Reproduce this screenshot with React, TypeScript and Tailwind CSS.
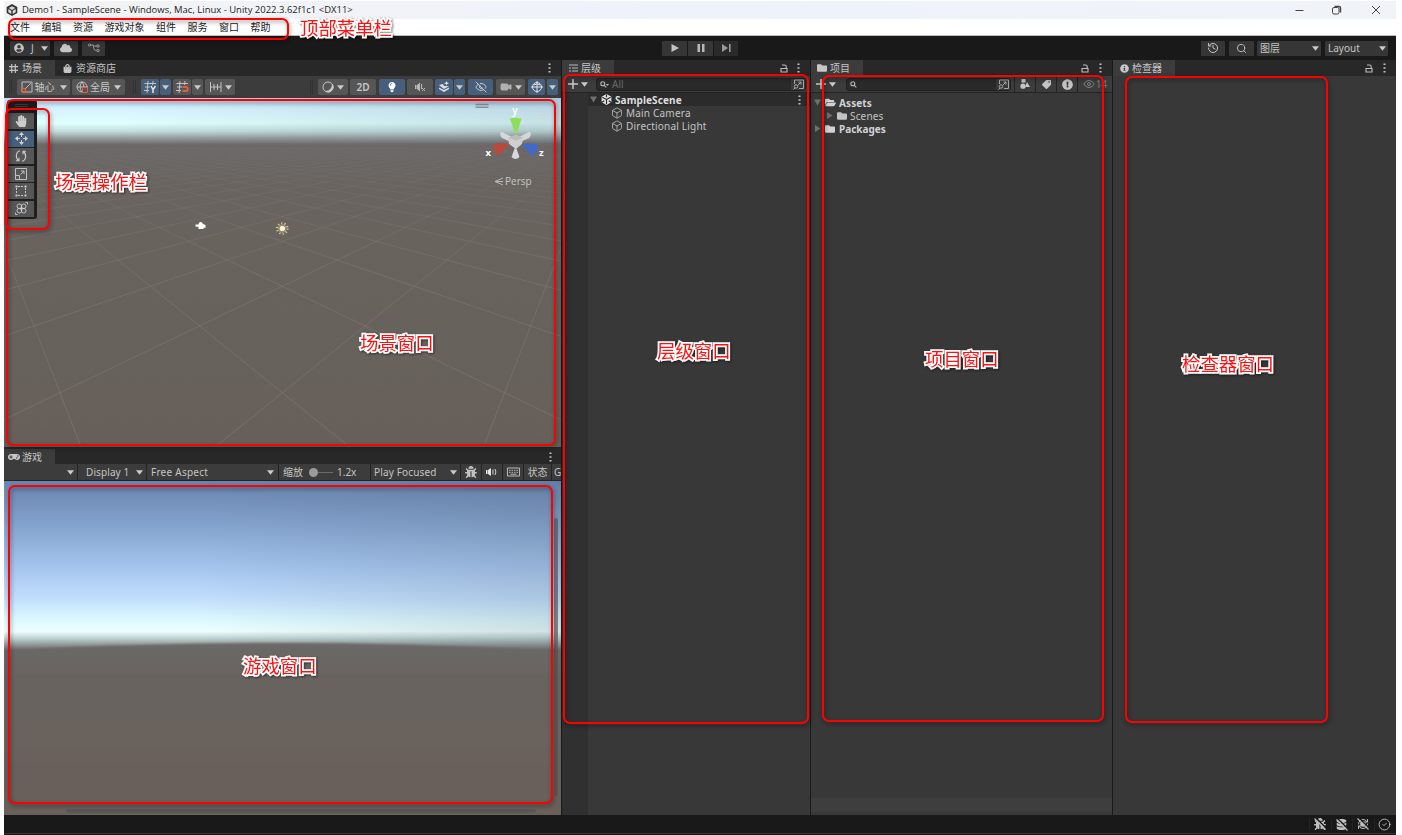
import React from 'react';
import { Globe, Search, History, Box, CircleCheck, EyeOff, Eye, RefreshCw, Video } from 'lucide-react';
import {
  FaFolder, FaFolderOpen, FaHandPaper, FaCloud, FaLightbulb, FaBug, FaTag, FaInfoCircle,
  FaExclamationCircle, FaGamepad, FaUserCircle, FaDatabase, FaShoppingBag,
} from 'react-icons/fa';

const Arrow = ({ className = '' }: { className?: string }) => (
  <svg viewBox="0 0 8 5" className={`h-[5px] w-[7px] shrink-0 ${className}`}>
    <path d="M0 0h8L4 5z" fill="#cacaca" />
  </svg>
);

const Dots = ({ className = '' }: { className?: string }) => (
  <svg viewBox="0 0 3 10" className={`h-[10px] w-[3px] shrink-0 ${className}`}>
    <path d="M.5 .500h2v1.600h-2zM.5 4.200h2v1.600h-2zM.5 7.900h2v1.600h-2z" fill="#c4c4c4" />
  </svg>
);

const LockIcon = ({ className = '' }: { className?: string }) => (
  <svg viewBox="0 0 8 9" className={`h-[9px] w-2 shrink-0 ${className}`} fill="none" stroke="#bdbdbd" strokeWidth="1.100">
    <path d="M1 4.500h6v3.500H1zM2 1h2.500q1.700 0 1.700 1.500v2" />
  </svg>
);

const Grip = ({ className = '' }: { className?: string }) => (
  <div className={`h-3.5 w-[3px] shrink-0 border-x border-[#323232] ${className}`} />
);

const Tool = ({ className = '', on = false, children }: { className?: string; on?: boolean; children?: React.ReactNode }) => (
  <div
    className={`flex h-4 shrink-0 items-center justify-center rounded-[2px] text-[10px] leading-none text-[#c8c8c8] ${
      on ? 'bg-[#46607c]' : 'bg-[#565656]'
    } ${className}`}
  >
    {children}
  </div>
);

const TopButton = ({ className = '', children }: { className?: string; children?: React.ReactNode }) => (
  <div className={`flex h-[15px] shrink-0 items-center rounded-[1px] bg-[#363636] text-[#c4c4c4] ${className}`}>{children}</div>
);

const GridGlyph = ({ kind }: { kind: 'grid' | 'magnet' | 'rule' }) => (
  <svg viewBox="0 0 13 12" className="h-3 w-[13px]" fill="none" stroke="#c4c4c4" strokeWidth="1">
    {kind === 'rule' ? (
      <path d="M1.500 1v10M5 3v6M8.500 3v6M12 1v10M1.500 6H12" />
    ) : (
      <path d="M.5 2.500H12M1 6h5M0 9.500h5M4 0L3 12M9 0L8.500 4" />
    )}
    {kind === 'grid' && <path d="M7 5l2 3.500L11.500 5M9 8.500V12" strokeWidth="1.500" stroke="#e4e4e4" />}
    {kind === 'magnet' && <path d="M6.500 6h3.300a2 2 0 010 4H6.500" stroke="#e0603c" strokeWidth="1.800" />}
  </svg>
);

function Header() {
  return (
    <>
      <div className="flex h-[18px] shrink-0 items-center bg-gradient-to-r from-[#f3f3f3] via-[#eef2fb] to-[#f0f3f8]">
        <svg viewBox="0 0 12 12" className="ml-0.5 h-3 w-3">
          <path d="M6 0l5.300 3v6L6 12 .7 9V3z" fill="#333" />
          <path d="M6 2.200L9.300 4 6 5.900 2.700 4zM2.300 5l3 1.700v3.300l-3-1.700zM9.700 5l-3 1.700v3.300l3-1.700z" fill="#d9d9d9" />
        </svg>
        <span className="ml-[4px] whitespace-nowrap font-['Open_Sans',sans-serif] text-[9.470px] leading-none text-[#222]">
          Demo1 - SampleScene - Windows, Mac, Linux - Unity 2022.3.62f1c1 &lt;DX11&gt;
        </span>
        <svg viewBox="0 0 90 12" className="ml-auto mr-[15px] h-3 w-[90px]" fill="none" stroke="#444" strokeWidth="1">
          <path d="M4.500 6.500h8M81 2l8 8M89 2l-8 8" />
          <rect x="41.500" y="3.500" width="6.500" height="6.500" rx="1.500" />
          <path d="M43.500 2.500h4.500q1.500 0 1.500 1.500v4.500" strokeWidth="1.400" />
        </svg>
      </div>
      <div className="flex h-[17px] shrink-0 items-start gap-[11.500px] border-b border-[#bdbdbd] bg-white pl-[6px] pt-[3px] text-[10px] leading-[11px] text-[#222]">
        {['文件', '编辑', '资源', '游戏对象', '组件', '服务', '窗口', '帮助'].map((t) => (
          <span key={t} className="shrink-0">{t}</span>
        ))}
      </div>
      <div className="flex h-6 shrink-0 items-center bg-[#191919]">
        <TopButton className="ml-[6px] w-10 pl-1">
          <FaUserCircle size={10} />
          <span className="ml-[7px] w-[3px] text-[10px]">J</span>
          <Arrow className="ml-[7px]" />
        </TopButton>
        <TopButton className="ml-1 w-6 justify-center"><FaCloud size={12} /></TopButton>
        <TopButton className="ml-1 w-[23px] justify-center">
          <svg viewBox="0 0 12 10" className="h-[10px] w-3" fill="none" stroke="#a0a0a0">
            <circle cx="1.600" cy="2" r="1.100" /><circle cx="10" cy="3" r="1.200" /><circle cx="10" cy="7.500" r="1.200" />
            <path d="M2.700 2h2.500l1 1h2.500M5.500 2.500c0 4 1 5 3.200 5" />
          </svg>
        </TopButton>
        <div className="ml-[557px] flex gap-px">
          <TopButton className="w-[25px] justify-center"><svg viewBox="0 0 8 8" className="h-2 w-2"><path d="M.5 0L8 4 .5 8z" fill="#c4c4c4" /></svg></TopButton>
          <TopButton className="w-[25px] justify-center"><svg viewBox="0 0 8 8" className="h-2 w-2"><path d="M.5 0h2.500v8H.5zM5 0h2.500v8H5z" fill="#b8b8b8" /></svg></TopButton>
          <div className="flex h-[15px] w-[24px] items-center justify-center bg-[#2a2a2a]"><svg viewBox="0 0 9 8" className="h-2 w-[9px]"><path d="M0 0l6 4-6 4zM7 0h1.600v8H7z" fill="#999" /></svg></div>
        </div>
        <TopButton className="ml-auto w-6 justify-center"><History size={12} /></TopButton>
        <TopButton className="ml-1 w-[25px] justify-center"><Search size={11} /></TopButton>
        <TopButton className="ml-[3px] w-16 justify-between pl-[3px] pr-[2px] text-[10px]"><span>图层</span><Arrow /></TopButton>
        <TopButton className="ml-1 mr-2 w-[63px] justify-between pl-[3px] pr-[2px] text-[10px]"><span>Layout</span><Arrow /></TopButton>
      </div>
    </>
  );
}

const Tab = ({ icon, label, className = '', active = true }: { icon: React.ReactNode; label: string; className?: string; active?: boolean }) => (
  <div className={`flex h-4 items-center text-[10px] leading-none text-[#c6c6c6] ${active ? 'bg-[#3c3c3c]' : ''} ${className}`}>
    {icon}
    <span className="whitespace-nowrap">{label}</span>
  </div>
);

const axisX = 282.3;
const horizon = 131;
const project = (a: number, b: number) => {
  const d = 1 / (0.00382 + (a + b) * 0.00131);
  return `${(axisX + (a - b) * 0.4246 * d).toFixed(1)} ${(horizon + d).toFixed(1)}`;
};
const lines = (from: number, to: number, step: number, far: number) => {
  let path = '';
  const count = Math.round((to - from) / step);
  for (let i = 0; i <= count; i++) {
    const n = from + i * step;
    path += `M${project(n, -1.2 - n)}L${project(n, far - n)}M${project(-1.2 - n, n)}L${project(far - n, n)}`;
  }
  return path;
};
const majorGrid = lines(-30, 30, 1, 44);
const minorGrid = lines(-3, 4, 0.1, 2.8);

function SceneView() {
  return (
    <svg viewBox="4 98 557 349" className="h-full w-full" preserveAspectRatio="none">
      <defs>
        <linearGradient id="sceneSky" x1="0" y1="98" x2="0" y2="447" gradientUnits="userSpaceOnUse">
          <stop offset="0" stopColor="#c0e0fa" />
          <stop offset=".035" stopColor="#d7f4ff" />
          <stop offset=".072" stopColor="#e0ffff" />
          <stop offset=".095" stopColor="#c3dddd" />
          <stop offset=".115" stopColor="#939e9e" />
          <stop offset=".134" stopColor="#6c6868" />
          <stop offset=".25" stopColor="#69645f" />
          <stop offset="1" stopColor="#67605a" />
        </linearGradient>
        <linearGradient id="sceneDim" x1="0" x2="1" y1="0" y2="0">
          <stop offset=".2" stopColor="#456" stopOpacity="0" />
          <stop offset="1" stopColor="#456" stopOpacity=".17" />
        </linearGradient>
        <linearGradient id="farFade" x1="0" y1="140" x2="0" y2="447" gradientUnits="userSpaceOnUse">
          <stop offset="0" stopColor="#000" />
          <stop offset=".08" stopColor="#444" />
          <stop offset=".45" stopColor="#eee" />
          <stop offset="1" stopColor="#fff" />
        </linearGradient>
        <linearGradient id="nearFade" x1="0" y1="270" x2="0" y2="447" gradientUnits="userSpaceOnUse">
          <stop offset="0" stopColor="#000" />
          <stop offset=".7" stopColor="#fff" />
        </linearGradient>
        <mask id="farMask" maskUnits="userSpaceOnUse" x="4" y="98" width="557" height="349"><rect x="4" y="98" width="557" height="349" fill="url(#farFade)" /></mask>
        <mask id="nearMask" maskUnits="userSpaceOnUse" x="4" y="98" width="557" height="349"><rect x="4" y="98" width="557" height="349" fill="url(#nearFade)" /></mask>
      </defs>
      <rect x="4" y="98" width="557" height="349" fill="url(#sceneSky)" />
      <rect x="4" y="98" width="557" height="46" fill="url(#sceneDim)" />
      <g mask="url(#farMask)"><path d={majorGrid} fill="none" stroke="#9a9e9e" strokeOpacity=".3" strokeWidth=".8" /></g>
      <g mask="url(#nearMask)"><path d={minorGrid} fill="none" stroke="#9c9c98" strokeOpacity=".07" strokeWidth=".7" /></g>
      <g stroke="#88929a" strokeWidth="1.500"><path d="M475.500 104.500h13M475.500 107.200h13" /></g>
      <g>
        <path d="M500 133q2-2 4 0l10 5-3 4-9-4q-2-2-2-5zM531 133q-2-2-4 0l-10 5 3 4 9-4q2-2 2-5z" fill="#d6d6d6" />
        <path d="M515.500 146l4 11q-4 4-8 0z" fill="#d8d8d8" />
        <path d="M508 138l8-3 7 3-1 6-6 5-7-5z" fill="#cfcfcf" />
        <path d="M508 138l8-3 7 3-7 2.500z" fill="#bcbcbc" />
        <path d="M510 118.500q6-1.500 11.500 0l-4.500 15h-2z" fill="#8ede5c" />
        <path d="M492.500 144.500q8-2 17-.5l-10.500 12q-6-4-6.500-11.500z" fill="#b54a3f" />
        <path d="M538.500 145q-8-2-17-1l10.500 12q6-4 6.500-11z" fill="#4468c8" />
      </g>
      <g fill="#fff" fontFamily="'Open Sans', sans-serif" fontSize="10" fontWeight="700">
        <text x="512.200" y="113.500" fontWeight="600">y</text><text x="485.500" y="155.500" fontSize="9.500">x</text><text x="539" y="155.500" fontSize="9.500">z</text>
      </g>
      <path d="M503 178l-8 3.500 8 3.500M503 181.500h-8" fill="none" stroke="#c0c0c0" strokeWidth=".9" />
      <text x="505" y="185" fill="#c6c6c6" fontFamily="'Open Sans', sans-serif" fontSize="10">Persp</text>
      <path d="M195.500 224.500h3q0-2.500 2-2.500 2 0 2.500 2l2.500 1v3l-2-.5v1.500h-5v-2l-3-.5z" fill="#fff" />
      <circle cx="282.300" cy="228.500" r="2.800" fill="#fff0cc" />
      <circle cx="282.300" cy="228.500" r="5.300" fill="none" stroke="#e2d0a0" strokeWidth="2" strokeDasharray="1.100 2.230" />
      <circle cx="282.300" cy="228.500" r="3.800" fill="none" stroke="#b5a98a" strokeWidth=".8" />
      <g fill="none" stroke="#e5c8c8" strokeOpacity=".5"><path d="M539.500 115.500h5v3h-5zM541 114c2-2 3-1 3 1" /></g>
    </svg>
  );
}

const sceneTools = [
  <FaHandPaper size={12} />,
  <svg viewBox="0 0 13 13" className="h-[13px] w-[13px]" fill="#d2d2d2"><path d="M6.500 0L9 3H4zM6.500 13L4 10h5zM0 6.500L3 4v5zM13 6.500L10 9V4z" /><path d="M6 3h1v2H6zM6 8h1v2H6zM3 6h2v1H3zM8 6h2v1H8z" /></svg>,
  <svg viewBox="0 0 12 12" className="h-3 w-3" fill="none" stroke="#c8c8c8" strokeWidth="1.100"><path d="M5 .8C1 1.500 0 7.500 3.500 10.500M1 10.800h3v-3M7 11.200C11 10.500 12 4.500 8.500 1.500M11 1.200H8v3" /></svg>,
  <svg viewBox="0 0 12 12" className="h-3 w-3" fill="none" stroke="#c0c0c0"><path d="M.5.5h11v11H.5zM.5 7.500H4.500v4M5.500 6.500L9 3M6 3h3v3" /></svg>,
  <svg viewBox="0 0 12 12" className="h-3 w-3" fill="none" stroke="#c8c8c8"><path d="M1.500 3v6M10.500 3v6M3 1.500h6M3 10.500h6" strokeDasharray="2 1" /><path d="M.5.500h2v2h-2zM9.500.500h2v2h-2zM.5 9.500h2v2h-2zM9.500 9.500h2v2h-2z" fill="#c8c8c8" stroke="none" /></svg>,
  <svg viewBox="0 0 13 13" className="h-[13px] w-[13px]" fill="none" stroke="#c8c8c8" strokeWidth=".9"><circle cx="4.300" cy="4.300" r="2.300" /><circle cx="8.700" cy="4.300" r="2.300" /><circle cx="4.300" cy="8.700" r="2.300" /><circle cx="8.700" cy="8.700" r="2.300" /><path d="M6.500 3v7M3 6.500h7M10.500.500h2v2M.5 10.500v2h2" /></svg>,
];

function ScenePanel() {
  return (
    <div className="flex h-[388px] flex-col bg-[#282828]">
      <div className="flex h-4 shrink-0 items-center bg-[#282828]">
        <Tab className="w-[51px] gap-1 pl-[5px]" label="场景" icon={<svg viewBox="0 0 9 9" className="h-[9px] w-[9px]" stroke="#c4c4c4" strokeWidth="1.200"><path d="M0 2.700h9M0 6.300h9M2.700 0v9M6.300 0v9" /></svg>} />
        <Tab active={false} className="gap-1 pl-2" label="资源商店" icon={<FaShoppingBag size={9} className="text-[#c4c4c4]" />} />
        <Dots className="ml-auto mr-[10px]" />
      </div>
      <div className="flex h-[22px] shrink-0 items-center bg-[#3c3c3c]">
        <Grip className="ml-[5px]" />
        <Tool className="ml-[5px] w-[53px]">
          <svg viewBox="0 0 12 12" className="h-3 w-3" fill="none" stroke="#bdbdbd"><path d="M1 1h10v10H1zM4 8l6-6" /><circle cx="2.800" cy="9.200" r="1.800" stroke="#e0603c" strokeWidth="1.400" /></svg>
          <span className="ml-[2px]">轴心</span><Arrow className="ml-[5px]" />
        </Tool>
        <Tool className="ml-[2px] w-[53px]">
          <div className="relative flex"><Globe size={12} strokeWidth={1.800} /><i className="absolute bottom-0 right-0 h-1.5 w-1.5 rounded-[1px] border border-[#e0603c] bg-[#565656]" /></div>
          <span className="ml-[2px]">全局</span><Arrow className="ml-[4px]" />
        </Tool>
        <Grip className="ml-2" />
        <Tool on className="ml-[5px] w-[18px]"><GridGlyph kind="grid" /></Tool>
        <Tool on className="ml-px w-[11px]"><Arrow /></Tool>
        <Tool className="ml-[2px] w-[18px]"><GridGlyph kind="magnet" /></Tool>
        <Tool className="ml-px w-[11px]"><Arrow /></Tool>
        <Tool className="ml-[2px] w-[30px] gap-[3px]"><GridGlyph kind="rule" /><Arrow /></Tool>
        <Grip className="ml-[75px]" />
        <Tool className="ml-[5px] w-[30px] gap-[3px]">
          <svg viewBox="0 0 12 12" className="h-3 w-3" fill="none" stroke="#c8c8c8"><circle cx="6" cy="6" r="5" /><path d="M10.500 3.500A5 5 0 014 10.500q6-1 6.500-7z" fill="#c8c8c8" /></svg>
          <Arrow />
        </Tool>
        <Tool className="ml-[2px] w-[26px] text-[9px] font-semibold">2D</Tool>
        <Tool on className="ml-[3px] w-[26px] text-white"><FaLightbulb size={10} /></Tool>
        <Tool className="ml-[2px] w-[26px]">
          <svg viewBox="0 0 11 10" className="h-[10px] w-[11px]"><path d="M0 3h1.500v4H0zM2 3l3-2.500v9L2 7z" fill="#b8b8b8" /><path d="M6.500 2v5M7 6l3 3M10 6l-3 3" stroke="#b8b8b8" /></svg>
        </Tool>
        <Tool on className="ml-[2px] w-[18px]">
          <svg viewBox="0 0 12 12" className="h-3 w-3" fill="#e0e0e0"><path d="M1 4l4-1 1 2h5L6 8zM1 6.500L6 9l5-2.500V8l-5 3-5-3zM8.500 0l.7 1.600 1.800.7-1.800.7L8.500 4.500 7.800 3 6 2.300l1.800-.7z" /></svg>
        </Tool>
        <Tool on className="ml-px w-[11px]"><Arrow /></Tool>
        <Tool on className="ml-[3px] w-[25px]"><EyeOff size={12} /></Tool>
        <Tool className="ml-[3px] w-[29px] gap-[3px]"><Video size={12} fill="#b0b0b0" className="text-[#b0b0b0]" /><Arrow /></Tool>
        <Tool on className="ml-[3px] w-[17px]">
          <svg viewBox="0 0 12 12" className="h-3 w-3" fill="none" stroke="#e0e0e0"><circle cx="6" cy="6" r="4.500" /><path d="M6 0v12M0 6h12M2.500 4q3.500-2 7 0" /></svg>
        </Tool>
        <Tool on className="ml-[2px] w-[11px]"><Arrow /></Tool>
      </div>
      <div className="relative h-[349px] shrink-0">
        <SceneView />
        <div className="absolute left-[3px] top-[2px] flex h-[119px] w-[30px] flex-col items-start rounded-[3px] bg-[#1e1e1e] pl-px">
          <div className="ml-[7px] mt-1 h-[3px] w-[13px] border-y border-[#3a3a3a]" />
          <div className="mt-[6px] flex flex-col gap-[1.500px]">
            {sceneTools.map((icon, i) => (
              <div key={i} className={`flex h-4 w-[26px] items-center justify-center text-[#cdcdcd] ${i === 1 ? 'bg-[#46607c]' : 'bg-[#565656]'}`}>{icon}</div>
            ))}
          </div>
        </div>
      </div>
    </div>
  );
}

const Cell = ({ className = '', children }: { className?: string; children?: React.ReactNode }) => (
  <div className={`flex h-full shrink-0 items-center border-r border-[#242424] ${className}`}>{children}</div>
);

function GamePanel() {
  return (
    <div className="flex min-h-0 flex-1 flex-col bg-[#282828] pt-px">
      <div className="flex h-[15px] shrink-0 items-center">
        <Tab className="w-[51px] gap-[2px] pl-1" label="游戏" icon={<FaGamepad size={12} />} />
        <Dots className="ml-auto mr-[9px]" />
      </div>
      <div className="flex h-[17px] shrink-0 items-center overflow-hidden border-b border-[#242424] bg-[#3c3c3c] text-[10px] leading-none text-[#c4c4c4]">
        <Cell className="w-[74px] justify-end pr-[3px]"><Arrow /></Cell>
        <Cell className="w-[69px] justify-between pl-2 pr-[3px]"><span className="whitespace-nowrap tracking-[0.100px]">Display 1</span><Arrow /></Cell>
        <Cell className="w-[132px] justify-between pl-1 pr-[4px]"><span className="whitespace-nowrap tracking-[0.250px]">Free Aspect</span><Arrow /></Cell>
        <Cell className="w-[92px] pl-1">
          <span>缩放</span>
          <i className="ml-[6px] h-[9px] w-[9px] rounded-full bg-[#9a9a9a]" />
          <i className="h-px w-[15px] bg-[#6a6a6a]" />
          <span className="ml-[4px]">1.2x</span>
        </Cell>
        <Cell className="w-[90px] justify-between pl-[3px] pr-[3px]"><span className="whitespace-nowrap tracking-[0.150px]">Play Focused</span><Arrow /></Cell>
        <Cell className="w-[21px] justify-center"><FaBug size={12} /></Cell>
        <Cell className="w-[21px] justify-center">
          <svg viewBox="0 0 12 10" className="h-[10px] w-3" fill="none" stroke="#d0d0d0"><path d="M0 3h1.500v4H0zM2 3l3-2v8L2 7z" fill="#e6e6e6" stroke="none" /><path d="M7 2.500v5M9 2q1.800 3 0 6" /></svg>
        </Cell>
        <Cell className="w-[21px] justify-center">
          <svg viewBox="0 0 13 10" className="h-[10px] w-[13px]" fill="none" stroke="#b8b8b8"><path d="M.5 1h12v8H.5z" /><path d="M2 3.300h9M2 5.300h9" strokeDasharray="1.500 1" /><path d="M3.500 7.200h6" /></svg>
        </Cell>
        <Cell className="w-[28px] justify-center"><span>状态</span></Cell>
        <span className="ml-[2px]">G</span>
      </div>
      <div className="min-h-0 flex-1">
        <svg viewBox="4 481 557 334" className="h-full w-full" preserveAspectRatio="none">
          <defs>
            <linearGradient id="gameSky" x1="0" y1="481" x2="0" y2="650" gradientUnits="userSpaceOnUse">
              <stop offset="0" stopColor="#6883ae" />
              <stop offset=".25" stopColor="#82a1cc" />
              <stop offset=".5" stopColor="#a3c3ec" />
              <stop offset=".7" stopColor="#c2dffd" />
              <stop offset=".82" stopColor="#dcf9ff" />
              <stop offset=".89" stopColor="#efffff" />
              <stop offset=".93" stopColor="#bfd3d1" />
              <stop offset="1" stopColor="#6c6868" />
            </linearGradient>
            <linearGradient id="gameDim" x1="0" x2="1" y1="0" y2="0">
              <stop offset=".35" stopColor="#567" stopOpacity="0" />
              <stop offset="1" stopColor="#567" stopOpacity=".2" />
            </linearGradient>
            <linearGradient id="ground" x1="0" x2="0" y1="0" y2="1">
              <stop offset="0" stopColor="#6c6868" /><stop offset=".2" stopColor="#69645f" /><stop offset="1" stopColor="#69605a" />
            </linearGradient>
            <filter id="soft" x="-5%" y="-5%" width="110%" height="110%"><feGaussianBlur stdDeviation="1.200" /></filter>
          </defs>
          <rect x="4" y="481" width="557" height="334" fill="url(#gameSky)" />
          <rect x="4" y="481" width="557" height="168" fill="url(#gameDim)" />
          <path d="M-10 651Q140 643 282 643T575 652V830H-10z" fill="url(#ground)" filter="url(#soft)" />
          <rect x="554" y="518" width="4" height="278" rx="2" fill="#555" fillOpacity=".65" />
          <rect x="66" y="809" width="470" height="4" rx="2" fill="#555" fillOpacity=".75" />
        </svg>
      </div>
    </div>
  );
}

const Plus = () => <svg viewBox="0 0 10 10" className="h-[10px] w-[10px] shrink-0" stroke="#c8c8c8" strokeWidth="1.500"><path d="M5 0v10M0 5h10" /></svg>;
const Fold = ({ open = false }: { open?: boolean }) => (
  <svg viewBox="0 0 7 7" className="h-[7px] w-[7px] shrink-0"><path d={open ? 'M0 .5h7L3.500 6.500z' : 'M1 0l5.500 3.500L1 7z'} fill="#707070" /></svg>
);
const PickIcon = () => (
  <svg viewBox="0 0 11 11" className="h-[11px] w-[11px] shrink-0" fill="none" stroke="#a8a8a8"><path d="M1.500 5V1h9v8.500H6M5 6l3-3M5.500 3H8v2.500" /><circle cx="3" cy="7.500" r="1.700" /><path d="M2 9L.5 10.500" /></svg>
);
const SearchBox = ({ className = '', text = '', arrow = false }: { className?: string; text?: string; arrow?: boolean }) => (
  <div className={`flex h-[13px] shrink-0 items-center rounded-[3px] border border-[#212121] bg-[#2a2a2a] text-[10px] leading-none text-[#6a6a6a] ${className}`}>
    <svg viewBox="0 0 9 7" className="ml-[3px] h-[7px] w-[9px]" fill="none" stroke="#bbb" strokeWidth="1.100"><circle cx="2.800" cy="2.800" r="2" /><path d="M4.300 4.300l2 2.200" />{arrow && <path d="M6 3h3L7.500 5z" fill="#bbb" stroke="none" />}</svg>
    <span className="ml-[3px]">{text}</span>
    <div className="ml-auto flex h-full w-[14px] items-center justify-center bg-[#383838]"><PickIcon /></div>
  </div>
);

function HierarchyPanel() {
  return (
    <div className="flex w-[248px] shrink-0 flex-col bg-[#383838] text-[10px] leading-none text-[#c4c4c4]">
      <div className="flex h-4 shrink-0 items-center bg-[#282828]">
        <Tab className="w-[52px] gap-[3px] pl-[7px]" label="层级" icon={<svg viewBox="0 0 9 8" className="h-2 w-[9px]" stroke="#bbb"><path d="M0 1h9M3 4h6M3 7h6M1 3v2M1 6v2" /></svg>} />
        <LockIcon className="ml-auto" />
        <Dots className="ml-[9px] mr-[10px]" />
      </div>
      <div className="flex h-[17px] shrink-0 items-center border-b border-[#242424] bg-[#3c3c3c]">
        <div className="ml-[6px] flex"><Plus /></div>
        <Arrow className="ml-[3px]" />
        <SearchBox arrow text="All" className="ml-[8px] w-[210px]" />
      </div>
      <div className="flex min-h-0 flex-1">
        <div className="w-[26px] shrink-0 bg-[#303030]" />
        <div className="flex flex-1 flex-col">
          <div className="flex h-[13px] items-center bg-[#2b2b2b] pl-[2px]">
            <Fold open />
            <svg viewBox="0 0 12 12" className="ml-1 h-[11px] w-[11px] shrink-0">
              <path d="M6 0l5.300 3v6L6 12 .7 9V3z" fill="#e6e6e6" />
              <path d="M6 6V11M6 6L1.500 3.500M6 6l4.500-2.500M6 .5v3M1 9l2.500-1.500M11 9L8.500 7.500" stroke="#2b2b2b" strokeWidth="1.300" />
            </svg>
            <span className="ml-[3px] font-bold tracking-[0.100px] text-[#dedede]">SampleScene</span>
            <Dots className="ml-auto mr-[9px]" />
          </div>
          {['Main Camera', 'Directional Light'].map((name) => (
            <div key={name} className="flex h-[13px] items-center pl-[23px]">
              <Box size={12} strokeWidth={1.800} className="shrink-0 text-[#b0b0b0]" />
              <span className="ml-[3px] whitespace-nowrap tracking-[0.200px]">{name}</span>
            </div>
          ))}
        </div>
      </div>
    </div>
  );
}

function ProjectPanel() {
  return (
    <div className="flex w-[301px] shrink-0 flex-col bg-[#383838] text-[10px] leading-none text-[#c4c4c4]">
      <div className="flex h-4 shrink-0 items-center bg-[#282828]">
        <Tab className="w-[52px] gap-[3px] pl-[6px]" label="项目" icon={<FaFolder size={10} />} />
        <LockIcon className="ml-auto" />
        <Dots className="ml-[10px] mr-[10px]" />
      </div>
      <div className="flex h-[17px] shrink-0 items-center border-b border-[#242424] bg-[#3c3c3c]">
        <div className="ml-[5px] flex"><Plus /></div>
        <Arrow className="ml-[3px]" />
        <SearchBox className="ml-[10px] w-[165px]" />
        <Cell className="ml-[3px] w-[22px] justify-center border-l">
          <svg viewBox="0 0 10 10" className="h-[10px] w-[10px]" fill="#c4c4c4"><path d="M1.500 0h4v3.500h-4z" /><circle cx="3" cy="7.200" r="2.600" /><path d="M7 3l3 5H5z" /></svg>
        </Cell>
        <Cell className="w-[21px] justify-center"><FaTag size={9} className="rotate-90" /></Cell>
        <Cell className="w-[21px] justify-center"><FaExclamationCircle size={11} /></Cell>
        <div className="flex flex-1 items-center justify-center gap-px text-[#808080]"><Eye size={12} /><span>14</span></div>
      </div>
      <div className="flex flex-1 flex-col pt-[3px]">
        <div className="flex h-[13px] items-center pl-[3px] font-bold text-[#d2d2d2]"><Fold open /><FaFolderOpen size={11} className="ml-1" /><span className="ml-[3px] tracking-[0.100px]">Assets</span></div>
        <div className="flex h-[13px] items-center pl-[15px]"><Fold /><FaFolder size={10} className="ml-1" /><span className="ml-[3px] tracking-[0.150px]">Scenes</span></div>
        <div className="flex h-[13px] items-center pl-[3px] font-bold text-[#d2d2d2]"><Fold /><FaFolder size={10} className="ml-1" /><span className="ml-1">Packages</span></div>
      </div>
      <div className="mb-[3px] h-[14px] shrink-0 bg-[#3e3e3e]" />
    </div>
  );
}

function InspectorPanel() {
  return (
    <div className="flex min-w-0 flex-1 flex-col bg-[#383838]">
      <div className="flex h-4 shrink-0 items-center bg-[#282828]">
        <Tab className="w-[62px] gap-[3px] pl-[7px]" label="检查器" icon={<FaInfoCircle size={9} />} />
        <LockIcon className="ml-auto" />
        <Dots className="ml-[10px] mr-[10px]" />
      </div>
    </div>
  );
}

const frames = [
  'left-[8px] top-[18px] h-[22px] w-[281px]',
  'left-[6px] top-[99px] h-[347px] w-[550px]',
  'left-[5px] top-[108px] h-[122px] w-[45px]',
  'left-[563px] top-[74px] h-[650px] w-[246px]',
  'left-[822px] top-[75px] h-[647px] w-[282px]',
  'left-[1125px] top-[76px] h-[647px] w-[203px]',
  'left-[8px] top-[485px] h-[319px] w-[545px]',
];
const notes: [string, string][] = [
  ['顶部菜单栏', 'left-[300px] top-[17px]'],
  ['场景操作栏', 'left-[55px] top-[171px]'],
  ['场景窗口', 'left-[360px] top-[332px]'],
  ['层级窗口', 'left-[657px] top-[340px]'],
  ['项目窗口', 'left-[925px] top-[348px]'],
  ['检查器窗口', 'left-[1182px] top-[353px]'],
  ['游戏窗口', 'left-[243px] top-[655px]'],
];

const StatusCell = ({ children }: { children: React.ReactNode }) => (
  <div className="relative flex w-[21.500px] justify-center border-l border-[#242424]">{children}</div>
);
const Strike = () => (
  <svg viewBox="0 0 12 12" className="absolute h-3 w-3" fill="none">
    <path d="M2 0l10 10" stroke="#191919" strokeWidth="1.400" /><path d="M.5.500l11 11" stroke="#c0c0c0" strokeWidth="1.100" />
  </svg>
);

export default function App() {
  return (
    <div className="relative h-[835px] w-[1402px] overflow-hidden bg-white pl-1 pt-px font-['Noto_Sans','Noto_Sans_CJK_SC',sans-serif]">
      <div className="flex h-[834px] w-[1392px] flex-col bg-[#191919]">
        <Header />
        <div className="flex h-[755px] shrink-0 gap-px">
          <div className="flex w-[557px] shrink-0 flex-col">
            <ScenePanel />
            <GamePanel />
          </div>
          <HierarchyPanel />
          <ProjectPanel />
          <InspectorPanel />
        </div>
        <div className="flex h-[19px] shrink-0 items-center justify-end border-b border-[#333] pr-px text-[#c0c0c0]">
          <StatusCell><FaBug size={12} /><Strike /></StatusCell>
          <StatusCell><FaDatabase size={11} /><Strike /></StatusCell>
          <StatusCell><RefreshCw size={12} /><svg viewBox="0 0 12 12" className="absolute h-3 w-3"><circle cx="6" cy="6" r="2.800" fill="#c0c0c0" /></svg><Strike /></StatusCell>
          <StatusCell><CircleCheck size={13} strokeWidth={1.700} /></StatusCell>
        </div>
      </div>
      {frames.map((f) => (
        <div key={f} className={`absolute rounded-[7px] border-2 border-[#fa0202] drop-shadow-[1px_2px_2px_rgba(0,0,0,0.45)] ${f}`} />
      ))}
      {notes.map(([text, place]) => (
        <div
          key={text}
          className={`absolute whitespace-nowrap font-['Noto_Sans_CJK_SC',sans-serif] text-[18.400px] font-normal leading-5 text-[#ff1010] drop-shadow-[1px_1px_1px_rgba(0,0,0,0.5)] [-webkit-text-stroke:3.500px_white] [paint-order:stroke_fill] ${place}`}
        >
          {text}
        </div>
      ))}
    </div>
  );
}
